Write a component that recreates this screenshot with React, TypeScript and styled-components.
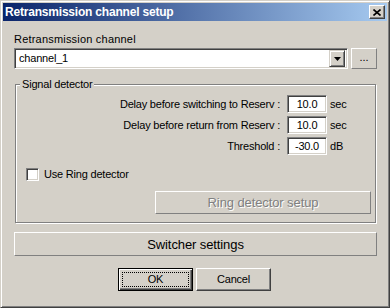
import React from "react";
import styled, { createGlobalStyle } from "styled-components";

const GlobalStyle = createGlobalStyle`
  html, body {
    margin: 0;
    padding: 0;
  }
  body {
    background: #d4d0c8;
    font-family: "Liberation Sans", Arial, sans-serif;
    font-size: 11px;
  }
`;

const Window = styled.div`
  width: 390px;
  height: 308px;
  box-sizing: border-box;
  background: #d4d0c8;
  border: 1px solid;
  border-color: #d4d0c8 #404040 #404040 #d4d0c8;
  box-shadow: inset 1px 1px 0 #fff, inset -1px -1px 0 #808080;
  padding: 2px;
  display: flex;
  flex-direction: column;
`;

const TitleBar = styled.div`
  height: 18px;
  flex-shrink: 0;
  display: flex;
  align-items: center;
  justify-content: space-between;
  padding: 0 2px;
  background: linear-gradient(to right, #0a246a, #a6caf0);
  color: #fff;
  font-weight: bold;
  font-size: 12px;
  letter-spacing: -0.2px;
`;

const CloseButton = styled.div`
  width: 16px;
  height: 14px;
  box-sizing: border-box;
  display: flex;
  align-items: center;
  justify-content: center;
  background: #d4d0c8;
  border: 1px solid;
  border-color: #fff #404040 #404040 #fff;
  box-shadow: inset -1px -1px 0 #808080;
`;

const Body = styled.div`
  display: flex;
  flex-direction: column;
  padding: 12px 10px 0 11px;
  line-height: 13px;
  letter-spacing: -0.2px;
  color: #000;
`;

const FieldLabel = styled.div`
  height: 13px;
  margin-bottom: 2px;
  letter-spacing: 0.2px;
`;

const ComboRow = styled.div`
  display: flex;
  gap: 3px;
`;

const Sunken = styled.div`
  box-sizing: border-box;
  background: #fff;
  border: 1px solid;
  border-color: #808080 #fff #fff #808080;
  box-shadow: inset 1px 1px 0 #404040, inset -1px -1px 0 #d4d0c8;
`;

const Combo = styled(Sunken)`
  flex: 1;
  height: 21px;
  display: flex;
  align-items: center;
  padding: 0 2px 0 4px;
`;

const ComboText = styled.span`
  flex: 1;
`;

const DropButton = styled.div`
  width: 16px;
  height: 17px;
  box-sizing: border-box;
  display: flex;
  align-items: center;
  justify-content: center;
  background: #d4d0c8;
  border: 1px solid;
  border-color: #d4d0c8 #404040 #404040 #d4d0c8;
  box-shadow: inset 1px 1px 0 #fff, inset -1px -1px 0 #808080;
`;

const FlatButton = styled.div<{ $disabled?: boolean; $big?: boolean }>`
  box-sizing: border-box;
  display: flex;
  align-items: center;
  justify-content: center;
  border: 1px solid;
  border-color: #fff #808080 #808080 #fff;
  font-size: ${(p) => (p.$big ? "13px" : "11px")};
  color: ${(p) => (p.$disabled ? "#808080" : "#000")};
  text-shadow: ${(p) => (p.$disabled ? "1px 1px 0 #fff" : "none")};
  letter-spacing: -0.1px;
`;

const DotsButton = styled(FlatButton)`
  width: 26px;
  height: 21px;
  padding-bottom: 2px;
`;

const Group = styled.fieldset`
  margin: 9px 1px 0 1px;
  padding: 4px 0 8px 0;
  border: 1px solid #808080;
  box-shadow: inset 1px 1px 0 #fff, 1px 1px 0 #fff;
  display: flex;
  flex-direction: column;
  min-width: 0;
`;

const Legend = styled.legend`
  margin-left: 4px;
  padding: 0 2px;
  background: #d4d0c8;
  line-height: 13px;
`;

const Rows = styled.div`
  display: flex;
  flex-direction: column;
  gap: 3px;
`;

const Row = styled.div`
  display: flex;
  align-items: center;
  height: 18px;
`;

const RowLabel = styled.span`
  flex: 1;
  text-align: right;
  margin-right: 7px;
`;

const NumberBox = styled(Sunken)`
  width: 40px;
  height: 18px;
  display: flex;
  align-items: center;
  justify-content: center;
`;

const Unit = styled.span`
  width: 45px;
  margin-left: 3px;
`;

const CheckRow = styled.div`
  display: flex;
  align-items: center;
  gap: 5px;
  height: 15px;
  margin-top: 12px;
  padding-left: 10px;
`;

const CheckBox = styled(Sunken)`
  width: 13px;
  height: 13px;
`;

const RingButton = styled(FlatButton)`
  align-self: flex-end;
  width: 216px;
  height: 23px;
  margin: 9px 4px 0 0;
`;

const SwitcherButton = styled(FlatButton)`
  height: 24px;
  margin-top: 9px;
`;

const Footer = styled.div`
  display: flex;
  justify-content: center;
  gap: 3px;
  margin-top: 12px;
  padding-right: 2px;
`;

const PushButton = styled.div<{ $default?: boolean }>`
  width: 75px;
  height: 23px;
  box-sizing: border-box;
  display: flex;
  align-items: stretch;
  padding: 3px;
  border: 1px solid;
  border-color: ${(p) =>
    p.$default ? "#000" : "#fff #404040 #404040 #fff"};
  box-shadow: ${(p) =>
    p.$default
      ? "inset 1px 1px 0 #fff, inset -1px -1px 0 #404040, inset -2px -2px 0 #808080"
      : "inset -1px -1px 0 #808080"};
`;

const ButtonFace = styled.span<{ $focus?: boolean }>`
  flex: 1;
  display: flex;
  align-items: center;
  justify-content: center;
  border: 1px dotted ${(p) => (p.$focus ? "#000" : "transparent")};
`;

const rows = [
  { label: "Delay before switching to Reserv :", value: "10.0", unit: "sec" },
  { label: "Delay before return from Reserv :", value: "10.0", unit: "sec" },
  { label: "Threshold :", value: "-30.0", unit: "dB" },
];

const App: React.FC = () => {
  return (
    <>
      <GlobalStyle />
      <Window>
        <TitleBar>
          <span>Retransmission channel setup</span>
          <CloseButton>
            <svg width="8" height="7" viewBox="0 0 8 7">
              <path d="M0.5 0.5L7.5 6.5M7.5 0.5L0.5 6.5" stroke="#000" strokeWidth="1.6" />
            </svg>
          </CloseButton>
        </TitleBar>
        <Body>
          <FieldLabel>Retransmission channel</FieldLabel>
          <ComboRow>
            <Combo>
              <ComboText>channel_1</ComboText>
              <DropButton>
                <svg width="7" height="4" viewBox="0 0 7 4">
                  <path d="M0 0H7L3.5 4Z" fill="#000" />
                </svg>
              </DropButton>
            </Combo>
            <DotsButton>...</DotsButton>
          </ComboRow>

          <Group>
            <Legend>Signal detector</Legend>
            <Rows>
              {rows.map((r) => (
                <Row key={r.label}>
                  <RowLabel>{r.label}</RowLabel>
                  <NumberBox>{r.value}</NumberBox>
                  <Unit>{r.unit}</Unit>
                </Row>
              ))}
            </Rows>
            <CheckRow>
              <CheckBox />
              <span>Use Ring detector</span>
            </CheckRow>
            <RingButton $disabled $big>
              Ring detector setup
            </RingButton>
          </Group>

          <SwitcherButton $big>Switcher settings</SwitcherButton>

          <Footer>
            <PushButton $default>
              <ButtonFace $focus>OK</ButtonFace>
            </PushButton>
            <PushButton>
              <ButtonFace>Cancel</ButtonFace>
            </PushButton>
          </Footer>
        </Body>
      </Window>
    </>
  );
};

export default App;
